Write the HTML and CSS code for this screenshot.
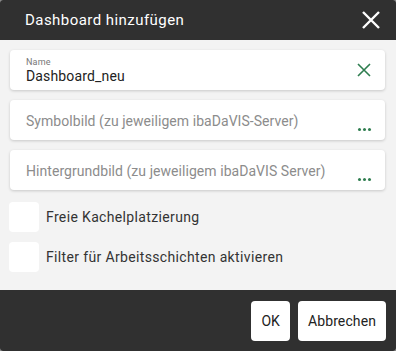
FILE: index.html
```html
<!DOCTYPE html>
<html lang="de">
<head>
    <meta charset="UTF-8">
    <meta name="viewport" content="width=device-width, initial-scale=1.0">
    <title>Dashboard hinzufügen</title>
    <link rel="stylesheet" href="styles.css">
</head>
<body>
    <div class="dialog">
        <div class="dialog-header">
            <div class="dialog-title">Dashboard hinzufügen</div>
            <button class="close-button" aria-label="Schließen">
                <svg width="20" height="20" viewBox="0 0 20 20">
                    <path d="M2 2 L18 18 M18 2 L2 18" stroke="#fff" stroke-width="2.4" fill="none"/>
                </svg>
            </button>
        </div>

        <div class="dialog-body">
            <div class="field field-filled">
                <div class="field-content">
                    <div class="field-label">Name</div>
                    <div class="field-value">Dashboard_neu</div>
                </div>
                <svg class="field-clear" width="14" height="14" viewBox="0 0 14 14">
                    <path d="M1 1 L13 13 M13 1 L1 13" stroke="#2e7d4f" stroke-width="1.6" fill="none"/>
                </svg>
            </div>

            <div class="field">
                <div class="field-placeholder">Symbolbild (zu jeweiligem ibaDaVIS-Server)</div>
                <div class="field-more"><span></span><span></span><span></span></div>
            </div>

            <div class="field">
                <div class="field-placeholder">Hintergrundbild (zu jeweiligem ibaDaVIS Server)</div>
                <div class="field-more"><span></span><span></span><span></span></div>
            </div>

            <label class="check-row">
                <span class="checkbox"></span>
                <span>Freie Kachelplatzierung</span>
            </label>

            <label class="check-row">
                <span class="checkbox"></span>
                <span>Filter für Arbeitsschichten aktivieren</span>
            </label>
        </div>

        <div class="dialog-footer">
            <button class="footer-button">OK</button>
            <button class="footer-button">Abbrechen</button>
        </div>
    </div>
</body>
</html>
```

FILE: styles.css
```css
* {
    margin: 0;
    padding: 0;
    box-sizing: border-box;
}

body {
    font-family: Roboto, 'Noto Sans', sans-serif;
    background: #8a8a8a;
    width: 396px;
    height: 351px;
    overflow: hidden;
}

.dialog {
    width: 396px;
    height: 351px;
    display: flex;
    flex-direction: column;
    background: #f3f3f3;
    border-radius: 3px;
    overflow: hidden;
}

.dialog-header {
    height: 40px;
    background: #303030;
    display: flex;
    align-items: center;
    justify-content: space-between;
    padding: 0 15px 0 25px;
}

.dialog-title {
    color: #fff;
    font-size: 15px;
    letter-spacing: 0.45px;
}

.close-button {
    background: none;
    border: none;
    width: 20px;
    height: 20px;
    display: flex;
    cursor: pointer;
}

.dialog-body {
    flex: 1;
    padding: 10px 11px 0 10px;
    display: flex;
    flex-direction: column;
}

.field {
    height: 40px;
    background: #fff;
    border-radius: 4px;
    box-shadow: 0 1px 3px rgba(0, 0, 0, 0.18);
    margin-bottom: 10px;
    display: flex;
    align-items: center;
    justify-content: space-between;
    padding: 0 13px 0 16px;
}

.field-label {
    font-size: 9px;
    color: #777;
    line-height: 11px;
    margin-top: 1px;
    letter-spacing: 0.2px;
}

.field-value {
    font-size: 14px;
    color: #222;
    line-height: 17px;
    letter-spacing: 0.15px;
}

.field-clear {
    margin-right: 1px;
}

.field-placeholder {
    font-size: 14px;
    color: #8c8c8c;
    margin-top: 2px;
    letter-spacing: 0.05px;
}

.field-more {
    display: flex;
    gap: 2px;
    align-self: flex-end;
    margin-bottom: 9px;
    margin-right: 1px;
}

.field-more span {
    width: 3px;
    height: 3px;
    border-radius: 50%;
    background: #2e7d4f;
}

.check-row {
    display: flex;
    align-items: center;
    gap: 7px;
    height: 30px;
    margin: 2px 0 10px -1px;
    font-size: 14px;
    color: #333;
    letter-spacing: 0.35px;
}

.check-row + .check-row {
    margin-top: 0;
}

.checkbox {
    width: 30px;
    height: 30px;
    background: #fff;
    border-radius: 4px;
}

.dialog-footer {
    height: 61px;
    background: #303030;
    display: flex;
    justify-content: flex-end;
    align-items: center;
    gap: 8px;
    padding: 0 10px 0 0;
}

.footer-button {
    height: 40px;
    background: #fff;
    border: none;
    border-radius: 4px;
    font-family: inherit;
    font-size: 14px;
    letter-spacing: 0.1px;
    color: #222;
    padding: 0 10px;
    cursor: pointer;
}
```
